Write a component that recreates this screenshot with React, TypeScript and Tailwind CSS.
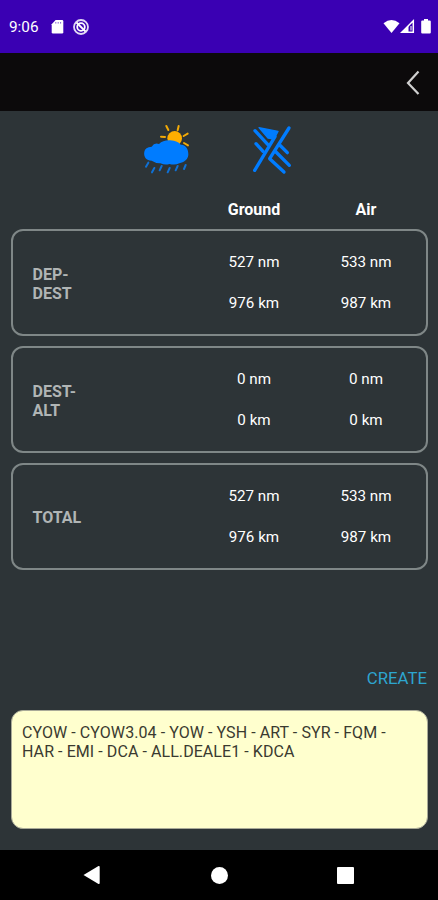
interface Distance {
  nm: number;
  km: number;
}

interface Leg {
  label: string;
  ground: Distance;
  air: Distance;
}

const LEGS: Leg[] = [
  { label: 'DEP-DEST', ground: { nm: 527, km: 976 }, air: { nm: 533, km: 987 } },
  { label: 'DEST-ALT', ground: { nm: 0, km: 0 }, air: { nm: 0, km: 0 } },
  { label: 'TOTAL', ground: { nm: 527, km: 976 }, air: { nm: 533, km: 987 } },
];

const ROUTE = 'CYOW - CYOW3.04 - YOW - YSH - ART - SYR - FQM - HAR - EMI - DCA - ALL.DEALE1 - KDCA';

const StatusBar = () => (
  <div className="flex h-[53px] shrink-0 items-center bg-[#3a00b3] pr-[7px] pl-[9px] text-white">
    <span className="w-[42px] pt-[2px] text-[15.3px] leading-none">9:06</span>
    <svg className="h-[16px] w-[13px]" viewBox="0 0 13 16" fill="currentColor">
      <path d="M4.6 1H11q1.3 0 1.3 1.3v11q0 1.3-1.3 1.3H2Q.7 14.6.7 13.3V5.2z" />
      <path d="M4.8 3v1.6M7.2 3v1.6M9.6 3v1.6" stroke="#3a00b3" strokeWidth=".6" />
    </svg>
    <svg className="ml-[8px] h-[18px] w-[18px]" viewBox="0 0 18 18" fill="none" stroke="currentColor">
      <circle cx="9" cy="9" r="7" strokeWidth="1.8" strokeOpacity=".85" />
      <circle cx="9" cy="9" r="3.8" strokeWidth="1.8" />
      <path d="M4.5 4.5l9 9" strokeWidth="1.8" />
    </svg>
    <div className="ml-auto flex items-center">
      <svg className="h-[15px] w-[17px]" viewBox="0 0 17 15" fill="currentColor">
        <path d="M.5 4.2Q8.5-2.2 16.5 4.2L8.5 14z" />
      </svg>
      <svg className="h-[15px] w-[15px]" viewBox="0 0 15 15">
        <path d="M13.3 1.8V13.3H1.8z" fill="none" stroke="currentColor" strokeWidth="1.5" />
        <path d="M8.5 6.5V13.3H1.8z" fill="currentColor" />
        <path d="M11 7v4.5" stroke="currentColor" strokeWidth="1" />
      </svg>
      <svg className="ml-[6px] h-[15px] w-[10px]" viewBox="0 0 10 15" fill="currentColor">
        <path d="M3 0h4v1.4h1.7q1.1 0 1.1 1.1v11q0 1.1-1.1 1.1H1.3q-1.1 0-1.1-1.1v-11q0-1.1 1.1-1.1H3z" />
      </svg>
    </div>
  </div>
);

const WeatherIcon = () => (
  <svg className="h-[70px] w-[70px]" viewBox="0 0 210 210" strokeLinecap="round">
    <g stroke="#f2aa08" strokeWidth="6">
      <path d="M94 33l6 12M131 33l-3 13M158 56l-12 7M78 65l12 1M147 84l12 7" />
    </g>
    <circle cx="119" cy="70" r="22" fill="#ffae00" />
    <path
      d="M50 95Q58 82 72 87Q84 75 105 76Q130 78 137 89C153 88 161 104 160 120C158 135 147 141 133 145Q121 151 103 147Q91 151 76 145Q65 146 50 137C34 137 25 125 28 110Q30 96 50 95z"
      fill="#007cff"
    />
    <path
      d="M40 143l-7 12M58 159l-7 13M80 153l-6 13M104 159l-6 13M128 153l-6 13M152 150l-5 12"
      stroke="#0f70d4"
      strokeWidth="6"
    />
  </svg>
);

const WindIcon = () => (
  <svg className="h-[70px] w-[70px]" viewBox="0 0 210 210" fill="none" strokeLinecap="round" strokeLinejoin="round">
    <path d="M57 38L114 49L102 72L84 69z" fill="#007cff" stroke="#007cff" strokeWidth="4" />
    <g stroke="#007cff" strokeWidth="10">
      <path d="M105 65L44 166" />
      <path d="M45 47L83 88" />
      <path d="M48 86L69 109" />
      <path d="M147 39L89 131L132 171" />
      <path d="M105 108L148 151" />
      <path d="M119 90L142 113" />
    </g>
  </svg>
);

const DistanceCell = ({ nm, km }: Distance) => (
  <div className="flex w-[112px] flex-col gap-[17px] text-center text-[15.2px] leading-[24px] text-white">
    <span>{nm} nm</span>
    <span>{km} km</span>
  </div>
);

const LegCard = ({ label, ground, air }: Leg) => (
  <div className="flex h-[107px] items-center rounded-[12px] border-2 border-[#7f8787] pr-[4px] pl-[19.5px]">
    <div className="w-[60px] pt-[2px] text-[16px] leading-[19px] font-bold text-[#b0b5b5]">{label}</div>
    <div className="ml-auto flex">
      <DistanceCell {...ground} />
      <DistanceCell {...air} />
    </div>
  </div>
);

const NavigationBar = () => (
  <div className="flex h-[50px] shrink-0 items-center bg-black pl-[83px] text-white">
    <svg className="h-[20px] w-[18px]" viewBox="0 0 18 20" fill="currentColor">
      <path d="M.5 10L15.5 1q1.2-.3 1.2 1v16q0 1.3-1.2 1z" />
    </svg>
    <div className="ml-[110px] h-[17px] w-[17px] rounded-full bg-white" />
    <div className="ml-[109px] h-[17px] w-[17px] rounded-[1px] bg-white" />
  </div>
);

export default function App() {
  return (
    <div className="flex h-[900px] w-[438px] flex-col overflow-hidden bg-[#2d3437] font-['Roboto',sans-serif]">
      <StatusBar />
      <header className="flex h-[58px] shrink-0 items-center justify-end bg-[#0c0a0b] pr-[17px]">
        <svg className="h-[26px] w-[16px]" viewBox="0 0 16 26" fill="none">
          <path d="M13.5 2.5L3 14L13.5 25" stroke="#d0d0d0" strokeWidth="2.2" />
        </svg>
      </header>
      <main className="flex flex-1 flex-col pt-[4px] pr-[10px] pb-[21px] pl-[11px]">
        <div className="flex gap-[35px] pl-[124px]">
          <WeatherIcon />
          <WindIcon />
        </div>
        <div className="mt-[13px] flex justify-end pr-[6px] text-center text-[16px] leading-[24px] font-bold text-white">
          <span className="w-[112px]">Ground</span>
          <span className="w-[112px]">Air</span>
        </div>
        <div className="mt-[7px] flex flex-col gap-[10px]">
          {LEGS.map((leg) => (
            <LegCard key={leg.label} {...leg} />
          ))}
        </div>
        <button className="mt-auto mr-px mb-[20px] self-end text-[16.8px] leading-[24px] text-[#2da5cf]">CREATE</button>
        <div className="h-[119px] rounded-[12px] border border-[#a9aa98] bg-[#ffffce] px-[10px] pt-[12px] text-[16px] leading-[19px] tracking-[0.07px] text-[#3a3a30]">
          {ROUTE}
        </div>
      </main>
      <NavigationBar />
    </div>
  );
}
